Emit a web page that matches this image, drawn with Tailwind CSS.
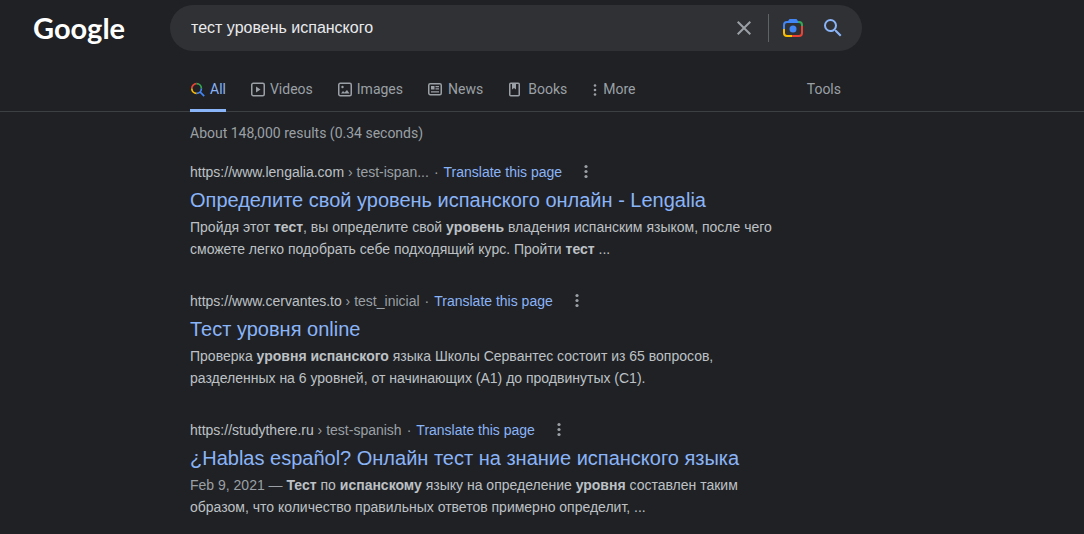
<!DOCTYPE html>
<html lang="en">
<head>
  <meta charset="UTF-8">
  <meta name="viewport" content="width=device-width, initial-scale=1.0">
  <title>тест уровень испанского - Google Search</title>
  <script src="https://cdn.jsdelivr.net/npm/@tailwindcss/browser@4"></script>
</head>
<body class="bg-[#202124] text-[#bdc1c6] font-['Liberation_Sans',Arial,sans-serif] text-sm min-h-screen">

  <!-- Header -->
  <header class="flex items-center pt-[5px] pr-4">
    <a href="#" class="w-[170px] shrink-0 pl-[33px] text-[29px] leading-[46px] font-bold text-white font-['Lato',sans-serif]">Google</a>
    <form role="search" class="flex items-center flex-1 max-w-[692px] h-[46px] rounded-full bg-[#303134] pl-[21px] pr-[17px]">
      <input type="text" aria-label="Search" value="тест уровень испанского" class="flex-1 min-w-0 bg-transparent text-base text-[#e8eaed] outline-none">
      <button type="button" aria-label="Clear" class="text-[#9aa0a6]">
        <svg class="w-6 h-6" viewBox="0 0 24 24" fill="currentColor"><path d="M19 6.41L17.59 5 12 10.59 6.41 5 5 6.41 10.59 12 5 17.59 6.41 19 12 13.41 17.59 19 19 17.59 13.41 12z"/></svg>
      </button>
      <span class="w-px h-7 bg-[#5f6368] mx-3"></span>
      <button type="button" aria-label="Search by image">
        <svg class="w-6 h-6" viewBox="0 0 24 24" fill="none" stroke-width="2">
          <path stroke="#34a853" d="M16 6h2a3 3 0 0 1 3 3v1"/>
          <path stroke="#ea4335" d="M21 10v7a3 3 0 0 1-3 3h-7"/>
          <path stroke="#fbbc04" d="M3 13v4a3 3 0 0 0 3 3h5"/>
          <path stroke="#4285f4" d="M3 13V9a3 3 0 0 1 3-3h11"/>
          <path fill="#4285f4" d="M6 6.500L8.500 3h7L18 6.500z"/>
          <circle cx="12" cy="13" r="3.500" fill="#4285f4"/>
        </svg>
      </button>
      <button type="submit" aria-label="Google Search" class="ml-4 text-[#8ab4f8]">
        <svg class="w-6 h-6" viewBox="0 0 24 24" fill="currentColor"><path d="M15.500 14h-.79l-.28-.27A6.471 6.471 0 0 0 16 9.500 6.500 6.500 0 1 0 9.500 16c1.610 0 3.090-.59 4.230-1.570l.27.28v.79l5 4.990L20.490 19l-4.990-5zm-6 0C7.010 14 5 11.990 5 9.500S7.010 5 9.500 5 14 7.010 14 9.500 11.990 14 9.500 14z"/></svg>
      </button>
    </form>
  </header>

  <!-- Tabs -->
  <nav class="mt-[17px] pl-[190px] border-b border-[#3c4043] text-[#9aa0a6] font-['Roboto',sans-serif]">
    <div class="flex justify-between max-w-[651px] -mb-px">
      <div class="flex gap-6">
        <a href="#" class="flex items-center gap-1 h-11 border-b-3 border-[#8ab4f8] text-[#8ab4f8]">
          <svg class="w-4 h-4" viewBox="0 0 16 16" fill="none" stroke-width="1.700">
            <path stroke="#ea4335" d="M1.800 7.500A4.800 4.800 0 0 1 6.600 2.700"/>
            <path stroke="#34a853" d="M6.600 2.700A4.800 4.800 0 0 1 11.400 7.500"/>
            <path stroke="#fbbc04" d="M1.800 7.500A4.800 4.800 0 0 0 6.600 12.300"/>
            <path stroke="#4285f4" d="M6.600 12.300A4.800 4.800 0 0 0 11.400 7.500M10 10.900L14.200 15.100"/>
          </svg>
          All
        </a>
        <a href="#" class="flex items-center gap-1 h-11 border-b-3 border-transparent">
          <svg class="w-4 h-4" viewBox="0 0 16 16" fill="currentColor"><rect x="1.750" y="2.250" width="12.500" height="12.500" rx="1.500" fill="none" stroke="currentColor" stroke-width="1.500"/><path d="M6 5.500v6l4.500-3z"/></svg>
          Videos
        </a>
        <a href="#" class="flex items-center gap-1 h-11 border-b-3 border-transparent">
          <svg class="w-4 h-4" viewBox="0 0 16 16" fill="currentColor"><rect x="1.750" y="2.250" width="12.500" height="12.500" rx="1.500" fill="none" stroke="currentColor" stroke-width="1.500"/><circle cx="5.500" cy="6" r="1.200"/><path d="M4 12.500l2-2.500 1.500 1.500L10 9l2.500 3.500z"/></svg>
          Images
        </a>
        <a href="#" class="flex items-center gap-[5px] h-11 border-b-3 border-transparent">
          <svg class="w-4 h-4" viewBox="0 0 16 16" fill="currentColor"><rect x="1.750" y="2.750" width="12.500" height="11" rx="1.500" fill="none" stroke="currentColor" stroke-width="1.500"/><path d="M4 5h3.500v3.500H4zM8.500 5H12v1.200H8.500zM8.500 7.300H12v1.200H8.500zM4 10.300h8v1.200H4z"/></svg>
          News
        </a>
        <a href="#" class="flex items-center gap-[5px] h-11 border-b-3 border-transparent">
          <svg class="w-4 h-4" viewBox="0 0 16 16" fill="currentColor"><rect x="2.750" y="2.250" width="9.500" height="12.500" rx="1" fill="none" stroke="currentColor" stroke-width="1.500"/><path d="M5 2.500h4v6L7 7 5 8.500z"/></svg>
          Books
        </a>
        <button type="button" class="flex items-center gap-1 h-11 border-b-3 border-transparent">
          <svg class="w-2 h-4" viewBox="0 0 8 16" fill="currentColor"><circle cx="4" cy="4.500" r="1.300"/><circle cx="4" cy="9" r="1.300"/><circle cx="4" cy="13.500" r="1.300"/></svg>
          More
        </button>
      </div>
      <button type="button" class="h-11 border-b-3 border-transparent">Tools</button>
    </div>
  </nav>

  <!-- Results -->
  <main class="pl-[190px] pt-[11px]">
    <p class="leading-5 text-[#9aa0a6] font-['Roboto',sans-serif]">About 148,000 results (0.34 seconds)</p>

    <div class="mt-4 max-w-[600px] space-y-7">
      <article>
        <div class="flex items-center h-[26px]">
          <cite class="not-italic">https://www.lengalia.com<span class="text-[#9aa0a6]"> › test-ispan...</span></cite>
          <span class="px-[5px] text-[#9aa0a6]">·</span>
          <a href="#" class="text-[#8ab4f8]">Translate this page</a>
          <button type="button" aria-label="About this result" class="ml-[18px] text-[#9aa0a6]">
            <svg class="w-3 h-4" viewBox="0 0 12 16" fill="currentColor"><circle cx="6" cy="2.500" r="1.600"/><circle cx="6" cy="7.500" r="1.600"/><circle cx="6" cy="12.500" r="1.600"/></svg>
          </button>
        </div>
        <h3 class="text-xl leading-[30px] text-[#8ab4f8]"><a href="#">Определите свой уровень испанского онлайн - Lengalia</a></h3>
        <p class="mt-px leading-[22px]">Пройдя этот <b>тест</b>, вы определите свой <b>уровень</b> владения испанским языком, после чего сможете легко подобрать себе подходящий курс. Пройти <b>тест</b> ...</p>
      </article>

      <article>
        <div class="flex items-center h-[26px]">
          <cite class="not-italic">https://www.cervantes.to<span class="text-[#9aa0a6]"> › test_inicial</span></cite>
          <span class="px-[5px] text-[#9aa0a6]">·</span>
          <a href="#" class="text-[#8ab4f8]">Translate this page</a>
          <button type="button" aria-label="About this result" class="ml-[18px] text-[#9aa0a6]">
            <svg class="w-3 h-4" viewBox="0 0 12 16" fill="currentColor"><circle cx="6" cy="2.500" r="1.600"/><circle cx="6" cy="7.500" r="1.600"/><circle cx="6" cy="12.500" r="1.600"/></svg>
          </button>
        </div>
        <h3 class="text-xl leading-[30px] text-[#8ab4f8]"><a href="#">Тест уровня online</a></h3>
        <p class="mt-px leading-[22px]">Проверка <b>уровня испанского</b> языка Школы Сервантес состоит из 65 вопросов, разделенных на 6 уровней, от начинающих (A1) до продвинутых (C1).</p>
      </article>

      <article>
        <div class="flex items-center h-[26px]">
          <cite class="not-italic">https://studythere.ru<span class="text-[#9aa0a6]"> › test-spanish</span></cite>
          <span class="px-[5px] text-[#9aa0a6]">·</span>
          <a href="#" class="text-[#8ab4f8]">Translate this page</a>
          <button type="button" aria-label="About this result" class="ml-[18px] text-[#9aa0a6]">
            <svg class="w-3 h-4" viewBox="0 0 12 16" fill="currentColor"><circle cx="6" cy="2.500" r="1.600"/><circle cx="6" cy="7.500" r="1.600"/><circle cx="6" cy="12.500" r="1.600"/></svg>
          </button>
        </div>
        <h3 class="text-xl leading-[30px] text-[#8ab4f8]"><a href="#">¿Hablas español? Онлайн тест на знание испанского языка</a></h3>
        <p class="mt-px leading-[22px]"><span class="text-[#9aa0a6]">Feb 9, 2021 — </span><b>Тест</b> по <b>испанскому</b> языку на определение <b>уровня</b> составлен таким образом, что количество правильных ответов примерно определит, ...</p>
      </article>
    </div>
  </main>

</body>
</html>
